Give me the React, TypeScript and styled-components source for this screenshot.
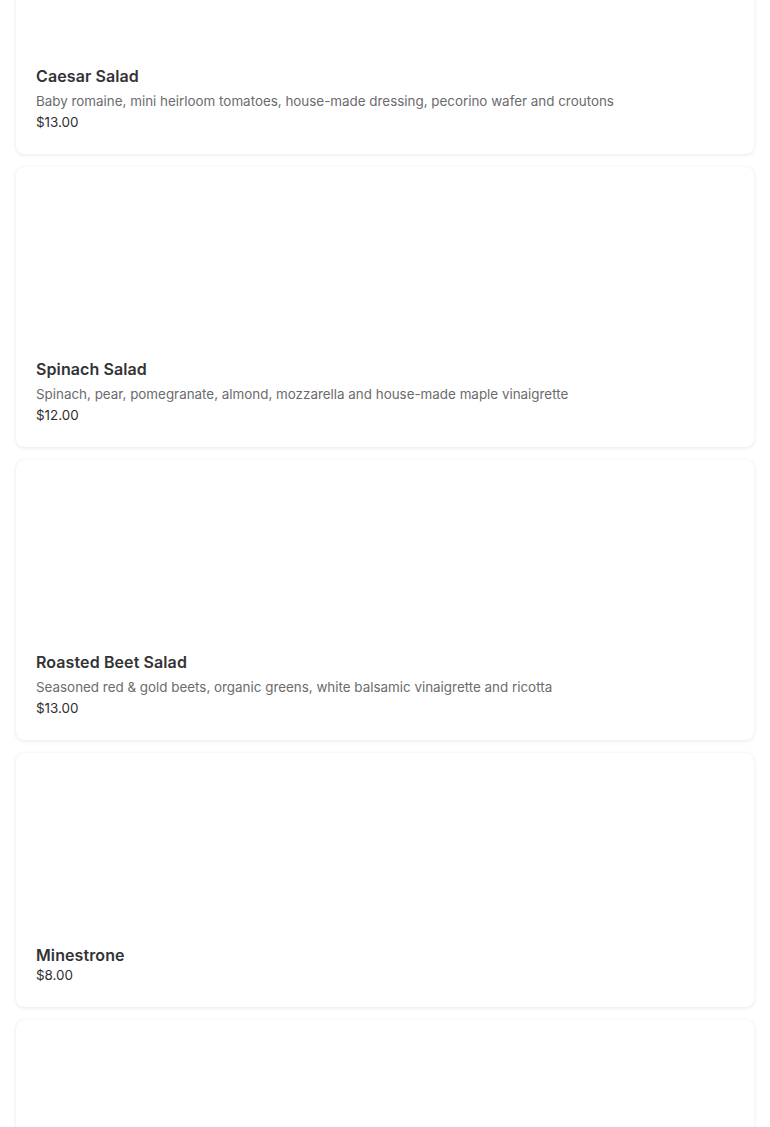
import React from "react";
import styled, { createGlobalStyle } from "styled-components";

const Global = createGlobalStyle`
  html, body { margin: 0; padding: 0; background: #ffffff; }
  body { font-family: "Inter", "Noto Sans", sans-serif; -webkit-font-smoothing: antialiased; }
  #root { overflow: hidden; height: 1127px; }
`;

const List = styled.div`
  display: flex;
  flex-direction: column;
  gap: 13px;
  padding: 0 16px;
  margin-top: -126px;
`;

const Card = styled.article`
  background: #ffffff;
  border-radius: 8px;
  box-shadow: 0 1px 4px rgba(0, 0, 0, 0.09), 0 0 1px rgba(0, 0, 0, 0.06);
  padding: 20px 20px 22px;
  display: flex;
  flex-direction: column;
`;

const ImageArea = styled.div`
  height: 172px;
`;

const Title = styled.h3`
  margin: 0;
  font-size: 16px;
  line-height: 20px;
  font-weight: 600;
  letter-spacing: 0.1px;
  color: #333336;
`;

const Description = styled.p`
  margin: 5px 0 1px;
  font-size: 13.4px;
  line-height: 20px;
  color: #6b6b6e;
`;

const Price = styled.div`
  font-size: 13.4px;
  line-height: 20px;
  color: #2e2e30;
`;

type Item = { name?: string; description?: string; price?: string };

const items: Item[] = [
  {
    name: "Caesar Salad",
    description:
      "Baby romaine, mini heirloom tomatoes, house-made dressing, pecorino wafer and croutons",
    price: "$13.00",
  },
  {
    name: "Spinach Salad",
    description:
      "Spinach, pear, pomegranate, almond, mozzarella and house-made maple vinaigrette",
    price: "$12.00",
  },
  {
    name: "Roasted Beet Salad",
    description:
      "Seasoned red & gold beets, organic greens, white balsamic vinaigrette and ricotta",
    price: "$13.00",
  },
  { name: "Minestrone", price: "$8.00" },
  {},
];

export default function App() {
  return (
    <>
      <Global />
      <List>
        {items.map((it, i) => (
          <Card key={i}>
            <ImageArea />
            {it.name && <Title>{it.name}</Title>}
            {it.description && <Description>{it.description}</Description>}
            {it.price && <Price>{it.price}</Price>}
          </Card>
        ))}
      </List>
    </>
  );
}
